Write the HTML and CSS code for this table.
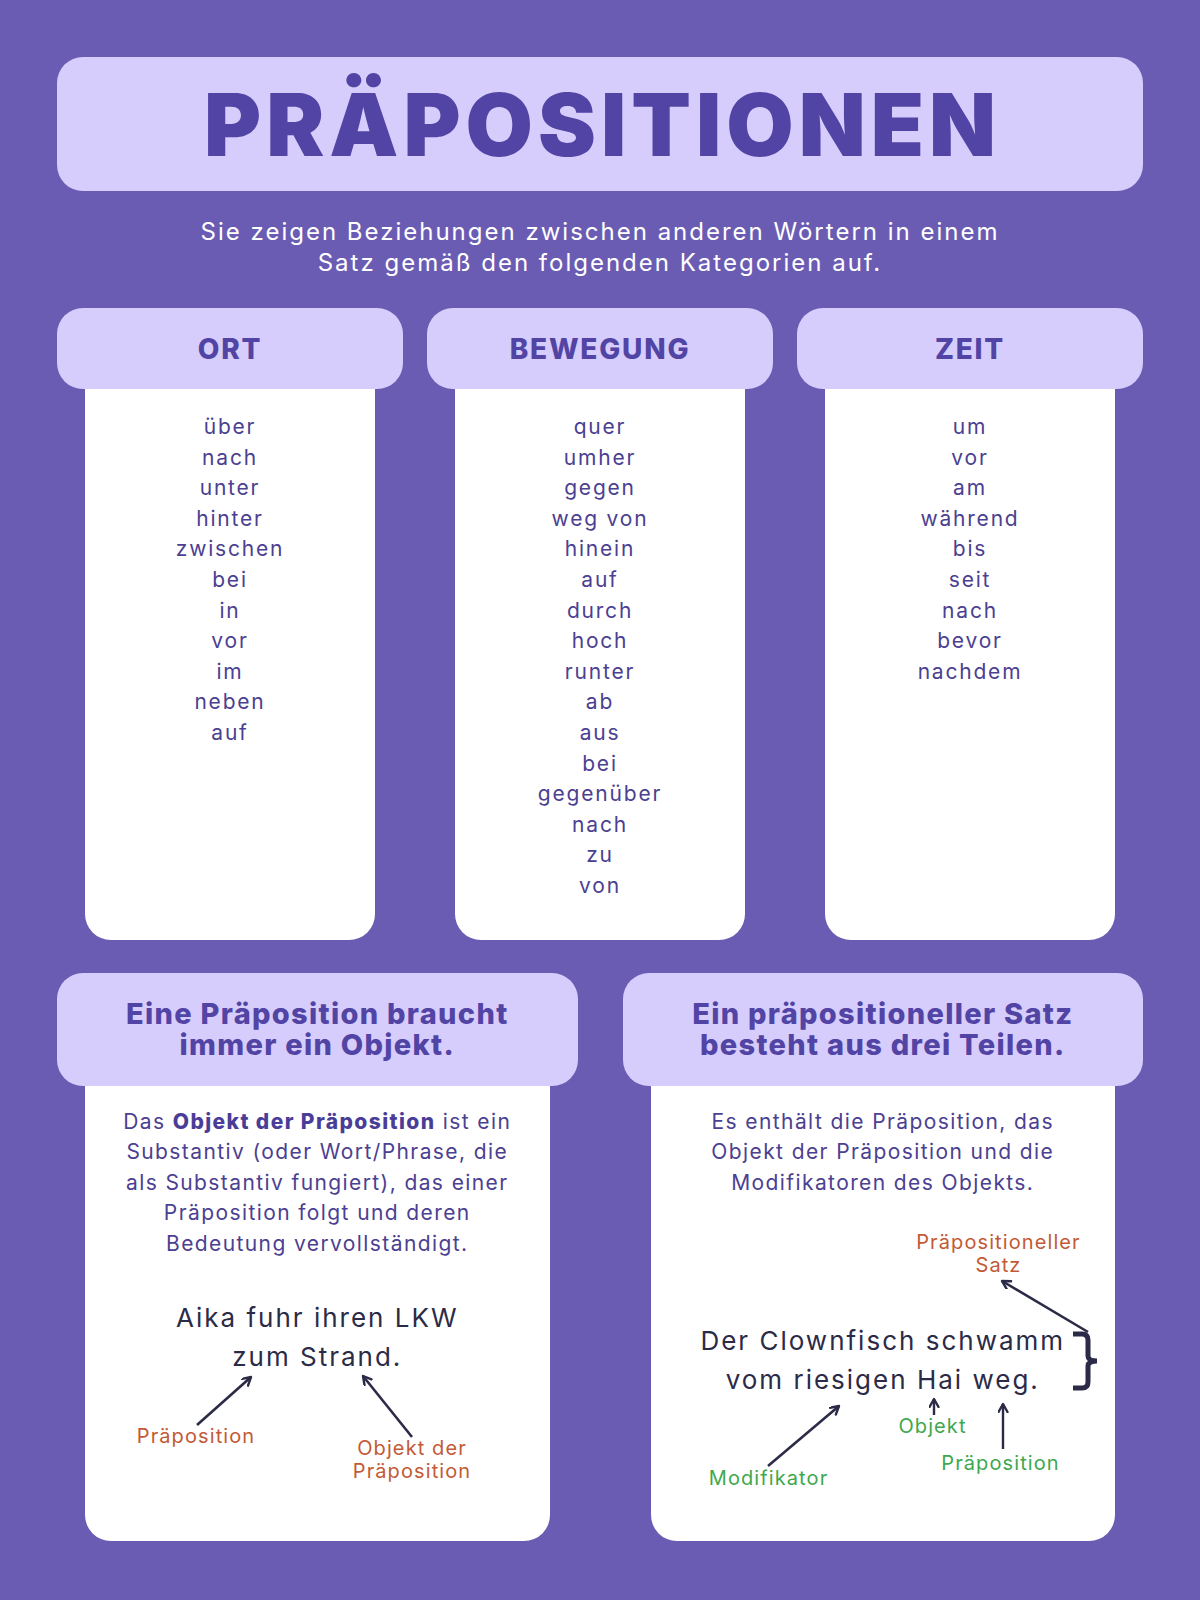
FILE: index.html
```html
<!DOCTYPE html>
<html lang="de">
<head>
<meta charset="utf-8">
<title>Präpositionen</title>
<link rel="stylesheet" href="styles.css">
</head>
<body>
<main class="page">
  <header class="title-box"><h1 class="title">PRÄPOSITIONEN</h1></header>
  <p class="intro">Sie zeigen Beziehungen zwischen anderen Wörtern in einem<br>Satz gemäß den folgenden Kategorien auf.</p>

  <section class="cats">
    <div class="cat">
      <h2 class="cat-head">ORT</h2>
      <ul class="cat-list">
        <li>über</li><li>nach</li><li>unter</li><li>hinter</li><li>zwischen</li><li>bei</li><li>in</li><li>vor</li><li>im</li><li>neben</li><li>auf</li>
      </ul>
    </div>
    <div class="cat">
      <h2 class="cat-head">BEWEGUNG</h2>
      <ul class="cat-list">
        <li>quer</li><li>umher</li><li>gegen</li><li>weg von</li><li>hinein</li><li>auf</li><li>durch</li><li>hoch</li><li>runter</li><li>ab</li><li>aus</li><li>bei</li><li>gegenüber</li><li>nach</li><li>zu</li><li>von</li>
      </ul>
    </div>
    <div class="cat">
      <h2 class="cat-head">ZEIT</h2>
      <ul class="cat-list">
        <li>um</li><li>vor</li><li>am</li><li>während</li><li>bis</li><li>seit</li><li>nach</li><li>bevor</li><li>nachdem</li>
      </ul>
    </div>
  </section>

  <section class="rules">
    <div class="rule">
      <h2 class="rule-head">Eine Präposition braucht<br>immer ein Objekt.</h2>
      <div class="rule-body">
        <p class="rule-text">Das <strong>Objekt der Präposition</strong> ist ein<br>Substantiv (oder Wort/Phrase, die<br>als Substantiv fungiert), das einer<br>Präposition folgt und deren<br>Bedeutung vervollständigt.</p>
        <div class="diagram diagram-left">
          <p class="sentence sentence-left">Aika fuhr ihren LKW<br>zum Strand.</p>
          <svg class="arrows" viewBox="0 0 464 281" width="464" height="281">
            <defs>
              <marker id="headL" markerWidth="12" markerHeight="12" refX="9" refY="5" orient="auto" markerUnits="userSpaceOnUse">
                <path d="M1 0.5 L9 5 L1 9.5" fill="none" stroke="#2c2b47" stroke-width="2.4" stroke-linecap="round" stroke-linejoin="round"/>
              </marker>
            </defs>
            <line x1="112" y1="165" x2="166" y2="117" stroke="#2c2b47" stroke-width="2.6" marker-end="url(#headL)"/>
            <line x1="327" y1="177" x2="278" y2="116" stroke="#2c2b47" stroke-width="2.6" marker-end="url(#headL)"/>
          </svg>
          <span class="label orange lab-prep">Präposition</span>
          <span class="label orange lab-obj">Objekt der<br>Präposition</span>
        </div>
      </div>
    </div>
    <div class="rule">
      <h2 class="rule-head">Ein präpositioneller Satz<br>besteht aus drei Teilen.</h2>
      <div class="rule-body">
        <p class="rule-text">Es enthält die Präposition, das<br>Objekt der Präposition und die<br>Modifikatoren des Objekts.</p>
        <div class="diagram diagram-right">
          <p class="sentence sentence-right">Der Clownfisch schwamm<br>vom riesigen Hai weg.</p>
          <svg class="arrows" viewBox="0 0 464 281" width="464" height="281">
            <defs>
              <marker id="headR" markerWidth="12" markerHeight="12" refX="9" refY="5" orient="auto" markerUnits="userSpaceOnUse">
                <path d="M1 0.5 L9 5 L1 9.5" fill="none" stroke="#2c2b47" stroke-width="2.4" stroke-linecap="round" stroke-linejoin="round"/>
              </marker>
            </defs>
            <path d="M422 74 H431 Q437 74 437 80 V96 Q437 101 446 101 Q437 101 437 106 V122 Q437 128 431 128 H422" fill="none" stroke="#2c2b47" stroke-width="5"/>
            <line x1="437" y1="72" x2="351" y2="21" stroke="#2c2b47" stroke-width="2.6" marker-end="url(#headR)"/>
            <line x1="283" y1="155" x2="283" y2="139" stroke="#2c2b47" stroke-width="2.4" marker-end="url(#headR)"/>
            <line x1="352" y1="189" x2="352" y2="144" stroke="#2c2b47" stroke-width="2.4" marker-end="url(#headR)"/>
            <line x1="117" y1="206" x2="188" y2="146" stroke="#2c2b47" stroke-width="2.6" marker-end="url(#headR)"/>
          </svg>
          <span class="label orange lab-satz">Präpositioneller<br>Satz</span>
          <span class="label green lab-objekt">Objekt</span>
          <span class="label green lab-praep">Präposition</span>
          <span class="label green lab-mod">Modifikator</span>
        </div>
      </div>
    </div>
  </section>
</main>
</body>
</html>
```

FILE: styles.css
```css
* { box-sizing: border-box; }

body {
  margin: 0;
  background: #6b5cb3;
  font-family: Inter, "Noto Sans", "Liberation Sans", sans-serif;
}

.page {
  width: 1200px;
  height: 1600px;
  padding: 57px 57px 0;
}

.title-box {
  height: 134px;
  border-radius: 26px;
  background: #d6cdfc;
  display: flex;
  align-items: center;
  justify-content: center;
}

.title {
  margin: 0 -5px 0 0;
  font-size: 87px;
  font-weight: 900;
  line-height: 1;
  letter-spacing: 5px;
  color: #5244a4;
}

.intro {
  margin: 25px 0 0;
  text-align: center;
  color: #ffffff;
  font-size: 24px;
  line-height: 31px;
  letter-spacing: 2px;
}

.cats {
  display: grid;
  grid-template-columns: repeat(3, 1fr);
  gap: 24px;
  margin-top: 30px;
}

.cat {
  display: flex;
  flex-direction: column;
}

.cat-head {
  margin: 0;
  height: 81px;
  border-radius: 26px;
  background: #d6cdfc;
  display: flex;
  align-items: center;
  justify-content: center;
  font-size: 28px;
  font-weight: 800;
  letter-spacing: 1.8px;
  color: #5244a4;
}

.cat-list {
  flex: 1;
  list-style: none;
  margin: 0 28px;
  padding: 23px 0 38px;
  background: #ffffff;
  border-radius: 0 0 26px 26px;
  text-align: center;
  font-size: 21px;
  line-height: 30.6px;
  letter-spacing: 1.8px;
  color: #4b4091;
}

.rules {
  display: grid;
  grid-template-columns: 1fr 1fr;
  gap: 45px;
  margin-top: 33px;
}

.rule {
  display: flex;
  flex-direction: column;
}

.rule-head {
  margin: 0;
  height: 113px;
  border-radius: 26px;
  background: #d6cdfc;
  display: flex;
  align-items: center;
  justify-content: center;
  text-align: center;
  font-size: 29px;
  font-weight: 800;
  line-height: 31px;
  letter-spacing: 1.3px;
  color: #5244a4;
}

.rule-body {
  margin: 0 28px;
  height: 455px;
  padding-top: 21px;
  background: #ffffff;
  border-radius: 0 0 26px 26px;
  display: flex;
  flex-direction: column;
}

.rule-text {
  margin: 0;
  text-align: center;
  font-size: 21px;
  line-height: 30.6px;
  letter-spacing: 1.4px;
  color: #4b4091;
}

.rule-text strong {
  font-weight: 800;
  color: #4a3d98;
}

.diagram {
  position: relative;
  margin-top: auto;
  height: 281px;
}

.sentence {
  margin: 0;
  text-align: center;
  font-size: 26px;
  line-height: 39px;
  letter-spacing: 2px;
  color: #2c2b47;
}

.sentence-left { padding-top: 38px; }
.sentence-right { padding-top: 61px; }

.arrows {
  position: absolute;
  left: 0;
  top: 0;
  overflow: visible;
}

.label {
  position: absolute;
  transform: translate(-50%, -50%);
  text-align: center;
  white-space: nowrap;
  font-size: 20px;
  line-height: 23.5px;
  letter-spacing: 1.1px;
}

.orange { color: #c35a35; }
.green { color: #3ea84e; }

.lab-prep { left: 111px; top: 177px; }
.lab-obj { left: 327px; top: 200px; }
.lab-satz { left: 348px; top: -6px; }
.lab-objekt { left: 282px; top: 167px; }
.lab-praep { left: 350px; top: 204px; }
.lab-mod { left: 118px; top: 219px; }
```
